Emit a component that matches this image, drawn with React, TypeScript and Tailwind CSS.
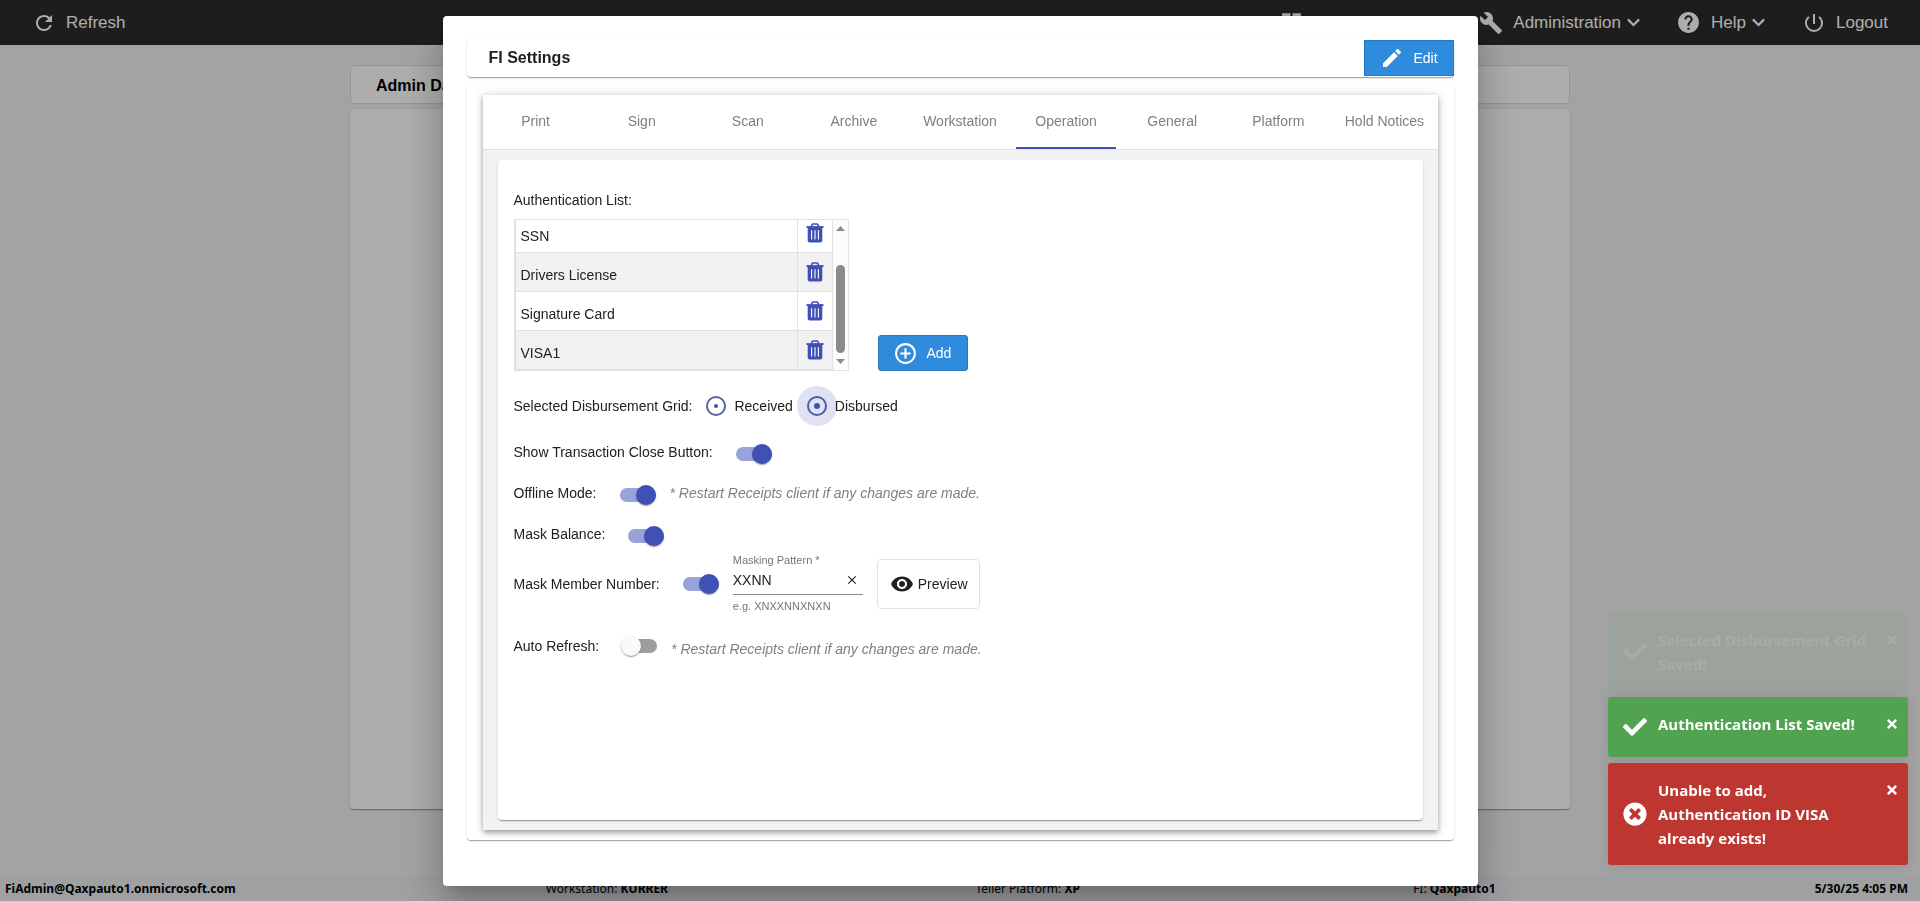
import { useState } from "react";
import type { ReactNode } from "react";
import clsx from "clsx";
import {
  MdAddCircleOutline,
  MdBuild,
  MdClose,
  MdDashboard,
  MdEdit,
  MdHelp,
  MdPowerSettingsNew,
  MdRefresh,
  MdVisibility,
} from "react-icons/md";
import { FaCheck, FaTimes, FaTimesCircle } from "react-icons/fa";

const TABS = ["Print", "Sign", "Scan", "Archive", "Workstation", "Operation", "General", "Platform", "Hold Notices"];

const AUTH_TYPES = ["SSN", "Drivers License", "Signature Card", "VISA1"];

const CARD_SHADOW =
  "shadow-[0_2px_1px_-1px_rgba(0,0,0,0.2),0_1px_1px_0_rgba(0,0,0,0.14),0_1px_3px_0_rgba(0,0,0,0.12)]";

function ChevronIcon() {
  return (
    <svg width="13" height="9" viewBox="0 0 13 9" fill="none" stroke="currentColor" strokeWidth="2.2" aria-hidden="true">
      <path d="M.9 1.4 6.5 7 12.1 1.4" />
    </svg>
  );
}

function TrashIcon() {
  return (
    <svg width="18" height="20" viewBox="0 0 18 20" aria-hidden="true">
      <path d="M5.4 3.4 6 1.9A1.3 1.3 0 0 1 7.2 1h3.6a1.3 1.3 0 0 1 1.2.9l.6 1.5" fill="none" stroke="#3f51b5" strokeWidth="1.5" />
      <path d="M.5 3.1h17V5H.5z" fill="#3f51b5" />
      <path d="M1.7 4.2h14.6v13.3a2 2 0 0 1-2 2H3.7a2 2 0 0 1-2-2z" fill="#3f51b5" />
      <path d="M5.6 7.2v9.2M9 7.2v9.2M12.4 7.2v9.2" stroke="#fff" strokeWidth="1.1" />
    </svg>
  );
}

function NavItem({ icon, label, menu }: { icon: ReactNode; label: string; menu?: boolean }) {
  return (
    <button type="button" className="flex items-center text-[17px] leading-6 text-white">
      {icon}
      <span className="ml-[10px]">{label}</span>
      {menu && (
        <span className="ml-[6px]">
          <ChevronIcon />
        </span>
      )}
    </button>
  );
}

function Toggle({ id, defaultChecked }: { id: string; defaultChecked?: boolean }) {
  return (
    <input
      id={id}
      type="checkbox"
      role="switch"
      defaultChecked={defaultChecked}
      className="relative h-[14px] w-9 shrink-0 appearance-none rounded-full bg-[#9e9e9e] before:absolute before:-top-[3px] before:left-0 before:size-5 before:rounded-full before:bg-[#fafafa] before:shadow-[0_2px_1px_-1px_rgba(0,0,0,0.2),0_1px_1px_0_rgba(0,0,0,0.14),0_1px_3px_0_rgba(0,0,0,0.12)] checked:bg-[#9aa3d9] checked:before:left-4 checked:before:bg-[#3f51b5]"
    />
  );
}

function SwitchRow({ id, label, children }: { id: string; label: string; children?: ReactNode }) {
  return (
    <div className="flex h-[41px] items-center pb-1">
      <label htmlFor={id}>{label}</label>
      <span className="ml-[23px] flex pt-1">
        <Toggle id={id} defaultChecked />
      </span>
      {children}
    </div>
  );
}

function RestartNote() {
  return <span className="ml-[14px] italic text-[#808080]">* Restart Receipts client if any changes are made.</span>;
}

function AuthenticationList() {
  return (
    <div className="flex h-[152px] w-[335px] border border-[#dee2e6]">
      <div className="flex min-w-0 flex-1 flex-col justify-end overflow-hidden">
        <table className="w-full shrink-0 border-separate border-spacing-0 border-l border-[#dee2e6]">
          <tbody>
            {AUTH_TYPES.map((name, i) => (
              <tr key={name} className={clsx("h-[39px]", i % 2 === 1 && "bg-[#f1f1f1]")}>
                <td className="border-b border-[#dee2e6] pt-[5px] pl-[5px] leading-5">{name}</td>
                <td className="w-[36px] border-x border-b border-[#dee2e6] p-0">
                  <button type="button" aria-label={`Delete ${name}`} className="mx-auto block">
                    <TrashIcon />
                  </button>
                </td>
              </tr>
            ))}
          </tbody>
        </table>
      </div>
      <div className="flex w-[15px] flex-col items-center bg-[#fcfcfc] py-[6px]" aria-hidden="true">
        <svg width="9" height="5" viewBox="0 0 9 5" fill="#8b8b8b">
          <path d="M4.5 0 9 5H0z" />
        </svg>
        <div className="mt-[34px] mb-[6px] w-[9px] flex-1 rounded-full bg-[#8b8b8b]" />
        <svg width="9" height="5" viewBox="0 0 9 5" fill="#8b8b8b">
          <path d="M4.5 5 0 0h9z" />
        </svg>
      </div>
    </div>
  );
}

function OperationPanel() {
  const [pattern, setPattern] = useState("XXNN");

  return (
    <div className={clsx("flex-1 rounded bg-white px-4 pt-7 text-sm text-[#212121]", CARD_SHADOW)}>
      <p className="leading-6">Authentication List:</p>
      <div className="mt-[7px] flex items-end gap-[29px]">
        <AuthenticationList />
        <button
          type="button"
          className="flex h-9 w-[90px] items-center rounded-[3px] border border-[#2779c2] bg-[#2f8cdd] pl-[14px] text-white"
        >
          <MdAddCircleOutline size={25} />
          <span className="ml-[9px]">Add</span>
        </button>
      </div>

      <div role="radiogroup" aria-labelledby="grid-label" className="mt-[15px] flex h-10 items-center">
        <span id="grid-label">Selected Disbursement Grid:</span>
        <input
          id="received"
          type="radio"
          name="grid"
          className="ml-[14px] flex size-5 appearance-none items-center justify-center rounded-full border-2 border-[#5a659f] before:size-1 before:rounded-full before:bg-[#3f51b5]"
        />
        <label htmlFor="received" className="ml-2">
          Received
        </label>
        <input
          id="disbursed"
          type="radio"
          name="grid"
          defaultChecked
          className="ml-[14px] flex size-5 appearance-none items-center justify-center rounded-full border-2 border-[#4d5cab] bg-[#e0e2f4] shadow-[0_0_0_10px_#e0e2f4] before:size-[6px] before:rounded-full before:bg-[#3f51b5]"
        />
        <label htmlFor="disbursed" className="relative ml-2">
          Disbursed
        </label>
      </div>

      <div className="mt-[7px]">
        <SwitchRow id="close-button" label="Show Transaction Close Button:" />
        <SwitchRow id="offline" label="Offline Mode:">
          <RestartNote />
        </SwitchRow>
        <SwitchRow id="mask-balance" label="Mask Balance:" />
      </div>
      <div className="flex h-14 items-center">
        <label htmlFor="mask-member">Mask Member Number:</label>
        <span className="ml-[23px] flex">
          <Toggle id="mask-member" defaultChecked />
        </span>
        <div className="ml-[14px] flex w-[130px] flex-col pb-[3px]">
          <label htmlFor="pattern" className="text-[11px] leading-4 text-[#757575]">
            Masking Pattern *
          </label>
          <div className="flex items-center border-b border-[#8c8c8c] pb-[2px]">
            <input
              id="pattern"
              value={pattern}
              onChange={(e) => setPattern(e.target.value)}
              className="w-0 flex-1 leading-6 outline-none"
            />
            <button type="button" aria-label="Clear pattern" onClick={() => setPattern("")} className="mr-1">
              <MdClose size={14} />
            </button>
          </div>
          <span className="mt-[3px] text-[11px] leading-4 text-[#757575]">e.g. XNXXNNXNXN</span>
        </div>
        <button
          type="button"
          className="ml-[14px] flex h-[50px] w-[103px] items-center rounded border border-[#e0e0e0] pl-3"
        >
          <MdVisibility size={24} />
          <span className="ml-1">Preview</span>
        </button>
      </div>
      <div className="mt-[14px] flex h-10 items-center">
        <label htmlFor="auto-refresh">Auto Refresh:</label>
        <span className="ml-[22px] flex">
          <Toggle id="auto-refresh" />
        </span>
        <span className="pt-[6px]">
          <RestartNote />
        </span>
      </div>
    </div>
  );
}

function SettingsDialog() {
  const [active, setActive] = useState("Operation");

  return (
    <div
      role="dialog"
      aria-label="FI Settings"
      className="flex h-full w-full max-w-[1035px] flex-col rounded bg-white px-6 pt-6 pb-[46px] shadow-[0_11px_15px_-7px_rgba(0,0,0,0.2),0_24px_38px_3px_rgba(0,0,0,0.14),0_9px_46px_8px_rgba(0,0,0,0.12)]"
    >
      <div className={clsx("flex h-[37px] items-start justify-between rounded bg-white", CARD_SHADOW)}>
        <h2 className="pl-[22px] text-base leading-9 font-bold text-[#212121]">FI Settings</h2>
        <button
          type="button"
          className="flex h-9 w-[90px] items-center border border-[#2779c2] bg-[#2f8cdd] pl-[15px] text-sm text-white"
        >
          <MdEdit size={24} />
          <span className="ml-[10px]">Edit</span>
        </button>
      </div>

      <div className={clsx("mt-2 flex flex-1 flex-col rounded bg-white px-4 py-[10px]", CARD_SHADOW)}>
        <div className="flex flex-1 flex-col bg-[#f2f2f2] shadow-[0_3px_5px_rgba(0,0,0,0.3),0_0_10px_rgba(0,0,0,0.15)]">
          <div role="tablist" className="flex h-[55px] border-b border-[#e0e0e0] bg-white">
            {TABS.map((tab) => (
              <button
                key={tab}
                type="button"
                role="tab"
                aria-selected={tab === active}
                onClick={() => setActive(tab)}
                className={clsx(
                  "mx-[3px] flex-1 basis-0 border-b-2 text-sm whitespace-nowrap text-[#7f7f7f]",
                  tab === active ? "border-[#3f51b5]" : "border-transparent"
                )}
              >
                {tab}
              </button>
            ))}
          </div>
          <div className="flex flex-1 flex-col px-[15px] py-[10px]">
            <OperationPanel />
          </div>
        </div>
      </div>
    </div>
  );
}

function Toast({ tone, fading, children }: { tone: "success" | "error"; fading?: boolean; children: ReactNode }) {
  return (
    <div
      role="status"
      className={clsx(
        "flex min-h-[60px] w-[300px] items-center rounded-[3px] pr-[9px] pl-[15px] text-white shadow-[0_0_12px_rgba(0,0,0,0.12)]",
        tone === "success" ? "bg-[#51a351]" : "bg-[#bd362f]",
        fading && "opacity-8"
      )}
    >
      {tone === "success" ? <FaCheck size={24} /> : <FaTimesCircle size={24} />}
      <p className="mr-[14px] ml-[11px] flex-1 self-start py-[15px] text-[15px] leading-6 font-bold">{children}</p>
      <button type="button" aria-label="Dismiss" className="mt-5 self-start">
        <FaTimes size={14} />
      </button>
    </div>
  );
}

export default function App() {
  return (
    <div className="flex min-h-screen flex-col bg-[#f1f1f1] font-['Liberation_Sans',Arial,sans-serif]">
      <header className="flex h-[45px] items-center justify-between bg-[#2c2c2c] pr-8 pl-8">
        <NavItem icon={<MdRefresh size={24} />} label="Refresh" />
        <nav className="flex items-center">
          <button type="button" aria-label="Dashboard" className="mr-[175px] text-white">
            <MdDashboard size={25} />
          </button>
          <NavItem icon={<MdBuild size={24} />} label="Administration" menu />
          <span className="w-[36px]" />
          <NavItem icon={<MdHelp size={25} />} label="Help" menu />
          <span className="w-[37px]" />
          <NavItem icon={<MdPowerSettingsNew size={24} />} label="Logout" />
        </nav>
      </header>

      <main className="mx-auto flex w-full max-w-[1220px] flex-1 flex-col pt-5 pb-[66px]">
        <div className="flex h-[39px] items-center rounded border border-[#dcdcdc] bg-white pt-[2px] pl-[25px]">
          <h1 className="text-base font-bold text-black">Admin Dashboard</h1>
        </div>
        <div className={clsx("mt-[5px] flex-1 rounded bg-white", CARD_SHADOW)} />
      </main>

      <footer className="grid h-[26px] grid-cols-[540fr_429fr_437fr_401fr_auto] items-center bg-[#e9ecef] pt-[2px] pr-3 pl-[5px] font-['Noto_Sans','Segoe_UI',sans-serif] text-xs text-black">
        <b>FiAdmin@Qaxpauto1.onmicrosoft.com</b>
        <span>
          Workstation: <b>KURRER</b>
        </span>
        <span>
          Teller Platform: <b>XP</b>
        </span>
        <span>
          FI: <b>Qaxpauto1</b>
        </span>
        <b>5/30/25 4:05 PM</b>
      </footer>

      <div className="fixed inset-0 flex justify-center bg-black/32 pt-4 pb-[15px]">
        <SettingsDialog />
      </div>

      <div className="fixed right-3 bottom-9 flex flex-col gap-[6px] font-['Open_Sans','Segoe_UI',sans-serif]">
        <Toast tone="success" fading>
          Selected Disbursement Grid Saved!
        </Toast>
        <Toast tone="success">Authentication List Saved!</Toast>
        <Toast tone="error">Unable to add, Authentication ID VISA already exists!</Toast>
      </div>
    </div>
  );
}
